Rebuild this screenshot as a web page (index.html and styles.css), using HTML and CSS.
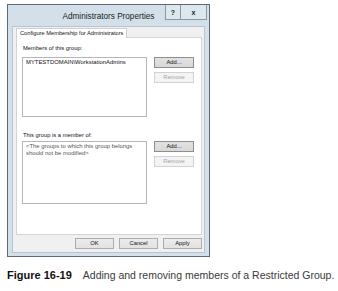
FILE: index.html
```html
<!DOCTYPE html>
<html lang="en">

<head>
    <meta charset="UTF-8">
    <meta name="viewport" content="width=device-width, initial-scale=1.0">
    <title>Administrators Properties</title>
    <link rel="stylesheet" href="styles.css">
</head>

<body>
    <div class="window">
        <div class="titlebar">
            <span class="title">Administrators Properties</span>
            <div class="caption-buttons">
                <span class="cap-btn help">?</span>
                <span class="cap-btn close">x</span>
            </div>
        </div>

        <div class="client">
            <div class="tabs">
                <span class="tab">Configure Membership for Administrators</span>
            </div>

            <div class="panel">
                <div class="group members">
                    <div class="group-label">Members of this group:</div>
                    <div class="row">
                        <div class="list list-members">
                            <div class="list-item">MYTESTDOMAIN\WorkstationAdmins</div>
                        </div>
                        <div class="side-buttons">
                            <button class="btn btn-focus">Add...</button>
                            <button class="btn" disabled>Remove</button>
                        </div>
                    </div>
                </div>

                <div class="group member-of">
                    <div class="group-label">This group is a member of:</div>
                    <div class="row">
                        <div class="list list-member-of">
                            <div class="list-item muted">&lt;The groups to which this group belongs<br>should not be modified&gt;</div>
                        </div>
                        <div class="side-buttons">
                            <button class="btn btn-focus">Add...</button>
                            <button class="btn" disabled>Remove</button>
                        </div>
                    </div>
                </div>
            </div>

            <div class="footer">
                <button class="btn">OK</button>
                <button class="btn">Cancel</button>
                <button class="btn">Apply</button>
            </div>
        </div>
    </div>

    <p class="caption"><b>Figure 16-19</b>Adding and removing members of a Restricted Group.</p>
</body>

</html>
```

FILE: styles.css
```css
:root {
    --frame-color: #d3e0e9;
    --frame-border: #5d6a76;
    --client-color: #f0f0f0;
    --box-border: #b3b6bb;
    --text-color: #111;
    --disabled-text: #a4a4a4;
}

body {
    margin: 0;
    background: #fff;
    font-family: 'Liberation Sans', Arial, sans-serif;
    color: var(--text-color);
}

.window {
    position: relative;
    box-sizing: border-box;
    width: 203px;
    height: 253px;
    margin: 4px 0 0 7px;
    padding: 0 5px 4px;
    border: 1px solid var(--frame-border);
    background: var(--frame-color);
    display: flex;
    flex-direction: column;
}

.titlebar {
    height: 22px;
    display: flex;
    align-items: center;
    justify-content: center;
}

.title {
    font-size: 8.2px;
    color: #222;
}

.caption-buttons {
    position: absolute;
    top: 0;
    right: 2px;
    display: flex;
}

.cap-btn {
    box-sizing: border-box;
    height: 15px;
    border: 1px solid #8a99a5;
    border-top: none;
    background: #dce7ee;
    display: flex;
    align-items: center;
    justify-content: center;
    font-size: 7px;
    font-weight: bold;
    color: #222;
}

.cap-btn.help {
    width: 16px;
}

.cap-btn.close {
    width: 26px;
    border-left: none;
}

.client {
    flex: 1;
    background: var(--client-color);
    box-shadow: 0 0 0 1px #b7c5cf;
    padding: 1px 2px 3px 3px;
    display: flex;
    flex-direction: column;
}

.tabs {
    display: flex;
    position: relative;
    z-index: 1;
    margin-bottom: -1px;
}

.tab {
    box-sizing: border-box;
    height: 10px;
    padding: 0 3px;
    border: 1px solid #cfcfcf;
    border-bottom: none;
    background: #fff;
    font-size: 5.7px;
    line-height: 9px;
}

.panel {
    box-sizing: border-box;
    height: 198px;
    padding: 6px 7px 0 5px;
    border: 1px solid #d4d4d4;
    background: #fff;
}

.group-label {
    height: 8px;
    padding-left: 1px;
    font-size: 5.8px;
    line-height: 8px;
}

.members .group-label {
    margin-bottom: 5px;
}

.member-of {
    margin-top: 14px;
}

.member-of .group-label {
    margin-bottom: 2px;
}

.row {
    display: flex;
    align-items: flex-start;
    gap: 7px;
}

.list {
    box-sizing: border-box;
    width: 125px;
    padding: 1px 2px;
    border: 1px solid var(--box-border);
    background: #fff;
}

.list-members {
    height: 60px;
}

.list-member-of {
    height: 63px;
}

.list-item {
    font-size: 5.9px;
    line-height: 7px;
    padding-left: 1px;
}

.list-item.muted {
    color: #555;
}

.side-buttons {
    display: flex;
    flex-direction: column;
    gap: 4px;
}

.btn {
    box-sizing: border-box;
    width: 40px;
    height: 11px;
    padding: 0;
    border: 1px solid #adadad;
    background: linear-gradient(#ececec, #e2e2e2);
    font-family: 'Liberation Sans', Arial, sans-serif;
    font-size: 5.8px;
    line-height: 9px;
    color: var(--text-color);
}

.btn-focus {
    border-color: #8e8e8e;
    background: linear-gradient(#e2e2e2, #d8d8d8);
}

.btn:disabled {
    border-color: #d2d2d2;
    background: #f4f4f4;
    color: var(--disabled-text);
}

.footer {
    display: flex;
    justify-content: flex-end;
    gap: 5px;
    margin-top: 3px;
}

.footer .btn {
    width: 39px;
}

.caption {
    margin: 12px 0 0 7px;
    font-size: 10.5px;
    line-height: 12px;
    color: #3a3a3a;
    white-space: nowrap;
}

.caption b {
    font-size: 11px;
    color: #111;
    margin-right: 11px;
}
```
